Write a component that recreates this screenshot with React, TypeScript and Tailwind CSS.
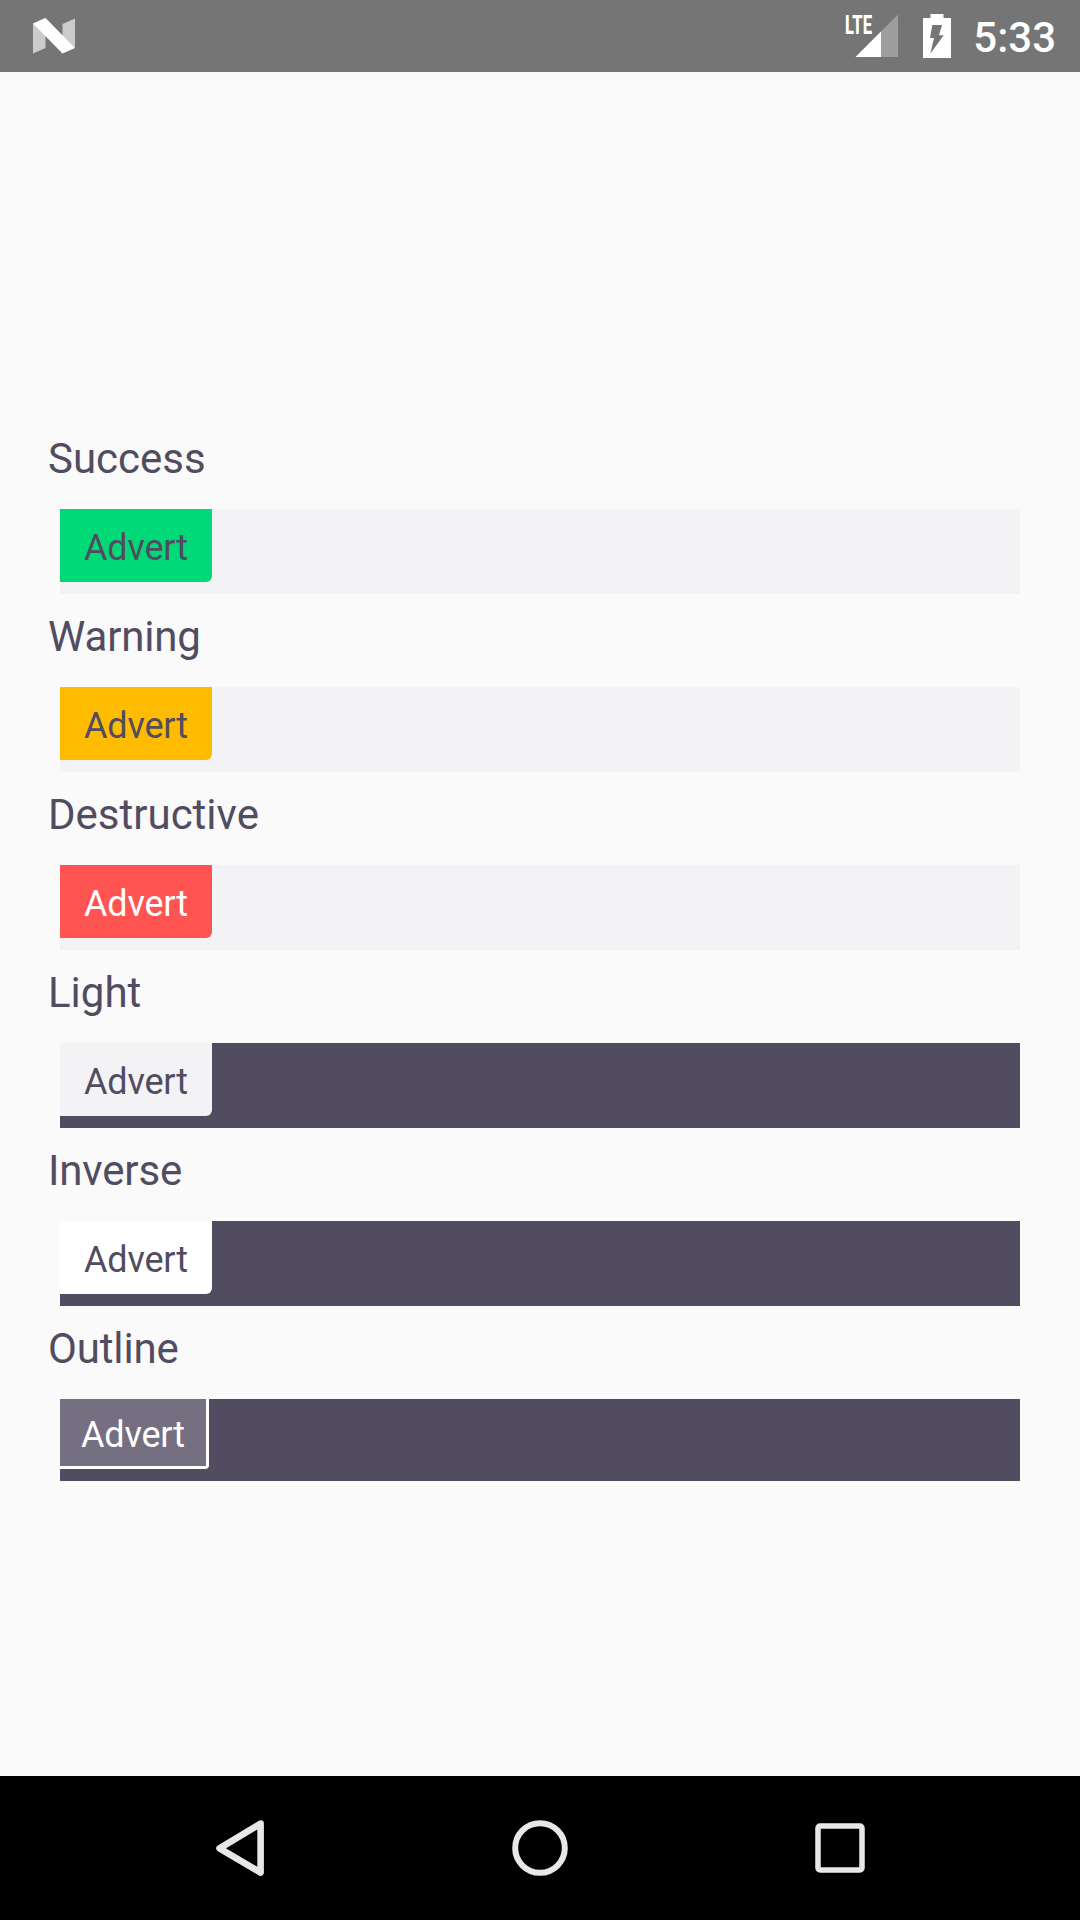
type BadgeItem = {
  label: string;
  tracking: string;
  bar: string;
  badge: string;
};

const items: BadgeItem[] = [
  { label: "Success", tracking: "tracking-normal", bar: "h-[85px] bg-[#f3f3f5]", badge: "h-[73px] w-[152px] rounded-br-[6px] pl-6 pt-[18px] bg-[#00d977] text-[#524c61]" },
  { label: "Warning", tracking: "tracking-[-0.15px]", bar: "h-[85px] bg-[#f3f3f5]", badge: "h-[73px] w-[152px] rounded-br-[6px] pl-6 pt-[18px] bg-[#ffbb00] text-[#524c61]" },
  { label: "Destructive", tracking: "tracking-normal", bar: "h-[85px] bg-[#f3f3f5]", badge: "h-[73px] w-[152px] rounded-br-[6px] pl-6 pt-[18px] bg-[#ff5452] text-white" },
  { label: "Light", tracking: "tracking-normal", bar: "h-[85px] bg-[#524c61]", badge: "h-[73px] w-[152px] rounded-br-[6px] pl-6 pt-[18px] bg-[#f3f3f5] text-[#524c61]" },
  { label: "Inverse", tracking: "tracking-[-0.15px]", bar: "h-[85px] bg-[#524c61]", badge: "h-[73px] w-[152px] rounded-br-[6px] pl-6 pt-[18px] bg-white text-[#524c61]" },
  { label: "Outline", tracking: "tracking-[-0.15px]", bar: "h-[82px] bg-[#524c61]", badge: "h-[70px] w-[149px] rounded-br-[4px] border-b-[3px] border-r-[3px] border-white pl-[21px] pt-[15px] bg-[#757081] text-white" },
];

function StatusBar() {
  return (
    <header className="flex h-[72px] shrink-0 bg-[#757575]">
      <svg className="ml-8 mt-4 h-10 w-11" viewBox="32 16 44 40">
        <path d="M33 23.5 45.5 18v30L33 53.5Z" fill="#cccccc" />
        <path d="M62.5 24 75 18.5V48L62.5 40Z" fill="#cccccc" />
        <path d="M33 23.5 45.5 18 75 48 62.5 53.5Z" fill="white" />
      </svg>
      <svg className="ml-auto mr-[20px] mt-[10px] h-12 w-[59px]" viewBox="842 10 59 48">
        <path d="M898 14.5V57H855.5Z" fill="#9e9e9e" />
        <path d="M881 31.5V57H855.5Z" fill="white" />
        <text x="845" y="33.5" fontSize="26" fontWeight="800" textLength="27" lengthAdjust="spacingAndGlyphs" fill="white">LTE</text>
      </svg>
      <svg className="mr-[21px] mt-[10px] h-12 w-[31px]" viewBox="921 10 31 48">
        <path d="M930.5 14h13v4h7.5v40h-28V18h7.5Z" fill="white" />
        <path d="M932.3 25H942l-3 10.3h4.7L930.3 53.7 934 38h-4Z" fill="#757575" />
      </svg>
      <span className="mr-[24px] mt-[10px] text-[42px] font-medium leading-[56px] text-white">5:33</span>
    </header>
  );
}

function NavBar() {
  return (
    <nav className="flex h-36 shrink-0 items-center justify-center gap-[156px] bg-black">
      <svg className="size-36" viewBox="0 0 144 144" fill="none" stroke="#e8e8e8">
        <path d="M92.6 47.6 51.5 72.3 92.6 96.6Z" strokeWidth="6.6" strokeLinejoin="round" />
      </svg>
      <svg className="size-36" viewBox="0 0 144 144" fill="none" stroke="#e8e8e8">
        <circle cx="72" cy="72" r="24.8" strokeWidth="6" />
      </svg>
      <svg className="size-36" viewBox="0 0 144 144" fill="none" stroke="#e8e8e8">
        <rect x="50" y="50" width="44" height="44" rx="2" strokeWidth="5.5" />
      </svg>
    </nav>
  );
}

export default function App() {
  return (
    <div className="flex h-[1920px] w-[1080px] flex-col bg-[#fafafa] font-['Roboto',sans-serif]">
      <StatusBar />
      <main className="flex-1 pt-[344px]">
        {items.map((item) => (
          <section key={item.label}>
            <h2 className={`h-[93px] pl-12 pt-[18px] text-[42px] leading-[49px] text-[#524c61] ${item.tracking}`}>{item.label}</h2>
            <div className={`mx-[60px] ${item.bar}`}>
              <div className={`text-[36px] leading-[42px] tracking-[-0.2px] ${item.badge}`}>Advert</div>
            </div>
          </section>
        ))}
      </main>
      <NavBar />
    </div>
  );
}
